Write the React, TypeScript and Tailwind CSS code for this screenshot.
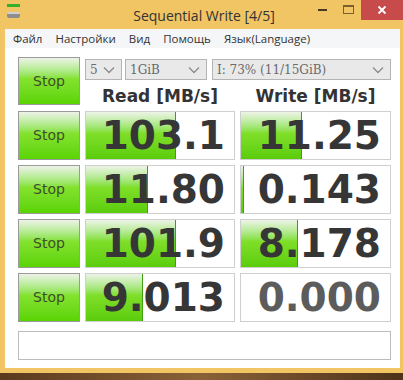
const readings = [
  { read: "103.1", readBar: 90, write: "11.25", writeBar: 61 },
  { read: "11.80", readBar: 62, write: "0.143", writeBar: 3 },
  { read: "101.9", readBar: 90, write: "8.178", writeBar: 57 },
  { read: "9.013", readBar: 57, write: "0.000", writeBar: 0 },
];

const menu = ["Файл", "Настройки", "Вид", "Помощь", "Язык(Language)"];

const StopButton = () => (
  <button className="w-[62px] h-full border border-[#9a9a9a] bg-linear-to-b from-[#eef3e8] via-[#84e22e] via-45% to-[#5ad400] text-[#3d4f2c] text-[14px] font-['DejaVu_Sans',sans-serif] flex items-center justify-center">
    Stop
  </button>
);

const Chevron = () => (
  <svg width="12" height="8" viewBox="0 0 12 8" className="shrink-0">
    <path d="M1 1.5 L6 6.5 L11 1.5" fill="none" stroke="#8a8a8a" strokeWidth="1.3" />
  </svg>
);

const Select = ({ label, width }: { label: string; width: string }) => (
  <div
    className={`${width} h-[21px] border border-[#b4b4b4] bg-[#e9e9e9] flex items-center justify-between pl-[4px] pr-[6px] text-[12px] text-[#6a6a6a] font-['DejaVu_Serif',serif]`}
  >
    <span>{label}</span>
    <Chevron />
  </div>
);

const ValueCell = ({ value, bar, dim }: { value: string; bar: number; dim?: boolean }) => (
  <div className="relative h-full border border-[#cfcfcf] bg-white overflow-hidden">
    {bar > 0 && (
      <div
        className="absolute left-0 top-0 bottom-0 border-r border-[#3f9e14] bg-linear-to-b from-[#edf3e6] via-[#80df28] via-45% to-[#5acd0a]"
        style={{ width: bar }}
      />
    )}
    <div
      className={`relative h-full flex items-center justify-end pr-[9px] text-[39px] font-bold leading-none font-['DejaVu_Sans',sans-serif] ${
        dim ? "text-[#5c5c5c]" : "text-[#363636]"
      }`}
    >
      {value}
    </div>
  </div>
);

export default function App() {
  return (
    <div className="w-[403px] h-[380px] flex flex-col bg-[#6e4b2b] overflow-hidden">
      <div className="h-[373px] flex flex-col bg-[#f1c464] px-[5px] pr-[3px] pb-[5px]">
        {/* title bar */}
        <div className="h-[29px] -mx-[5px] -mr-[3px] flex items-start">
          <div className="w-[94px] pl-[7px] pt-[4px] flex flex-col gap-[5px]">
            <div className="w-[13px] h-[3px] bg-[#35b02a]" />
            <div className="w-[13px] h-[6px] rounded-[2px] bg-[#8e8e8e] border-t-2 border-[#d0d0d0]" />
          </div>
          <div className="flex-1 text-center pt-[5px] pl-[5px] text-[14px] text-[#333] font-['Open_Sans',sans-serif]">
            Sequential Write [4/5]
          </div>
          <div className="w-[94px] flex items-start">
            <div className="w-[26px] h-[20px] flex items-center justify-center">
              <div className="w-[9px] h-[2px] bg-[#4a3a20]" />
            </div>
            <div className="w-[26px] h-[20px] flex items-start justify-center pt-[5px]">
              <div className="w-[11px] h-[9px] border border-[#7a6030] border-t-2" />
            </div>
            <div className="w-[42px] h-[20px] bg-[#c84b4b] flex items-center justify-center">
              <svg width="10" height="10" viewBox="0 0 10 10">
                <path d="M1.5 1.5 L8.5 8.5 M8.5 1.5 L1.5 8.5" stroke="#fff" strokeWidth="1.8" />
              </svg>
            </div>
          </div>
        </div>

        {/* menu */}
        <div className="h-[19px] bg-[#f5f6f8] flex items-center gap-[13px] pl-[8px] text-[11.5px] text-[#333] font-['Open_Sans',sans-serif]">
          {menu.map((m) => (
            <span key={m}>{m}</span>
          ))}
        </div>

        {/* content */}
        <div className="flex-1 bg-white pl-[13px] pt-[9px]">
          <div className="grid grid-cols-[62px_150px_151px] auto-rows-[49px] gap-[5px]">
            <div className="h-[48px]">
              <StopButton />
            </div>
            <div className="col-span-2 flex flex-col">
              <div className="flex items-center mt-[2px]">
                <Select label="5" width="w-[37px]" />
                <div className="w-[3px]" />
                <Select label="1GiB" width="w-[82px]" />
                <div className="w-[5px]" />
                <Select label="I: 73% (11/15GiB)" width="w-[179px]" />
              </div>
              <div className="flex mt-[4px] text-[17px] font-bold text-[#333] font-['DejaVu_Sans',sans-serif]">
                <div className="w-[150px] text-center">Read [MB/s]</div>
                <div className="w-[5px]" />
                <div className="w-[151px] text-center">Write [MB/s]</div>
              </div>
            </div>
            {readings.map((r, i) => (
              <div key={i} className="contents">
                <StopButton />
                <ValueCell value={r.read} bar={r.readBar} />
                <ValueCell value={r.write} bar={r.writeBar} dim={r.writeBar === 0} />
              </div>
            ))}
          </div>
          <div className="mt-[9px] w-[373px] h-[29px] border border-[#bcbcbc] bg-white" />
        </div>
      </div>
      <div className="flex-1 bg-linear-to-r from-[#5a3a1e] via-[#8a6238] to-[#4e331a]" />
    </div>
  );
}
